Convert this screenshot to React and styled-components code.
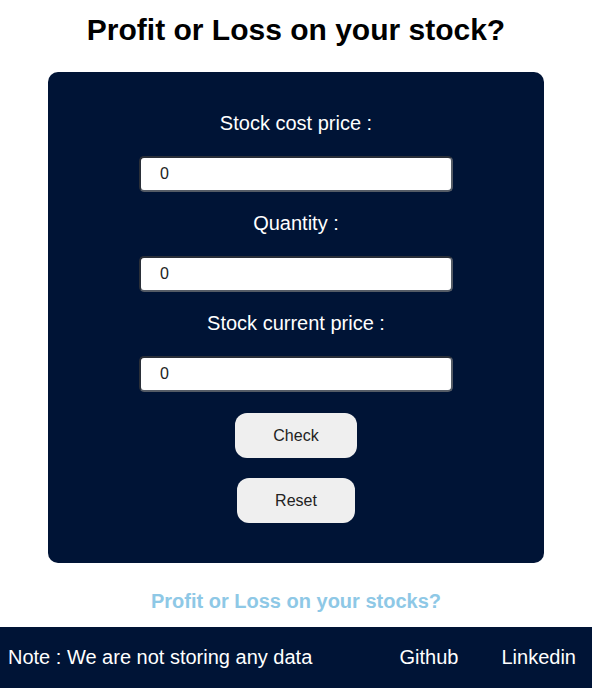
import React from "react";
import styled, { createGlobalStyle } from "styled-components";

const Global = createGlobalStyle`
  body { margin: 0; font-family: Arial, "Liberation Sans", sans-serif; background: #fff; }
`;

const Title = styled.h1`
  margin: 0;
  padding-top: 12px;
  text-align: center;
  font-size: 30px;
  line-height: 36px;
  font-weight: bold;
  color: #000;
`;

const Card = styled.div`
  margin: 24px 48px 0 48px;
  background: #001436;
  border-radius: 10px;
  height: 491px;
  box-sizing: border-box;
  display: flex;
  flex-direction: column;
  align-items: center;
  padding-top: 39px;
`;

const Label = styled.label`
  color: #fff;
  font-size: 20px;
  line-height: 24px;
  margin-bottom: 21px;
`;

const Input = styled.input`
  width: 314px;
  height: 36px;
  box-sizing: border-box;
  border: 2px solid #555c66;
  border-top-color: #2a2f38;
  border-left-color: #2a2f38;
  border-radius: 5px;
  padding: 0 0 0 19px;
  font-size: 16px;
  font-family: Arial, "Liberation Sans", sans-serif;
  color: #222;
  background: #fff;
  margin-bottom: 19px;
`;

const Button = styled.button`
  width: ${(p) => p.w}px;
  height: 45px;
  border: none;
  border-radius: 12px;
  background: #efefef;
  color: #222;
  font-size: 16px;
  font-family: Arial, "Liberation Sans", sans-serif;
  margin-top: ${(p) => p.mt}px;
`;

const Sub = styled.h2`
  margin: 26px 0 0;
  text-align: center;
  color: #8ec8e6;
  font-size: 20px;
  line-height: 24px;
  font-weight: bold;
`;

const Footer = styled.footer`
  margin-top: 14px;
  height: 61px;
  background: #001436;
  color: #fff;
  display: flex;
  align-items: center;
  padding: 0 16px 0 8px;
  font-size: 20px;
`;

const Note = styled.span`
  flex: 1;
`;

const Link = styled.a`
  color: #fff;
  text-decoration: none;
  margin-left: ${(p) => p.ml}px;
`;

export default function App() {
  return (
    <>
      <Global />
      <Title>Profit or Loss on your stock?</Title>
      <Card>
        <Label>Stock cost price :</Label>
        <Input defaultValue="0" />
        <Label>Quantity :</Label>
        <Input defaultValue="0" />
        <Label>Stock current price :</Label>
        <Input defaultValue="0" />
        <Button w={122} mt={2}>Check</Button>
        <Button w={118} mt={20}>Reset</Button>
      </Card>
      <Sub>Profit or Loss on your stocks?</Sub>
      <Footer>
        <Note>Note : We are not storing any data</Note>
        <Link ml={0}>Github</Link>
        <Link ml={43}>Linkedin</Link>
      </Footer>
    </>
  );
}
